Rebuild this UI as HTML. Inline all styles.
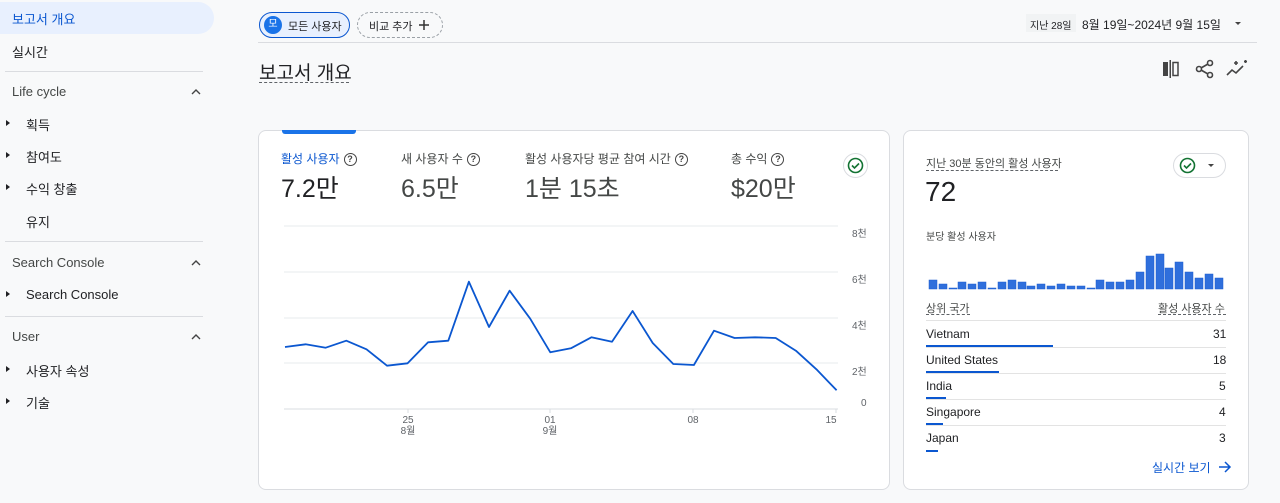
<!DOCTYPE html>
<html><head><meta charset="utf-8"><style>
*{box-sizing:border-box;margin:0;padding:0}
body{width:1280px;height:503px;overflow:hidden;background:#f8f9fa;font-family:"Liberation Sans","Noto Sans CJK KR",sans-serif;color:#202124;position:relative}
.a{position:absolute;white-space:nowrap}
.nav{font-size:13px;color:#202124}
.sec{font-size:13px;color:#444746}
.hr{position:absolute;height:1px;background:#dadce0}
.tri{position:absolute;width:0;height:0;border-top:3.5px solid transparent;border-bottom:3.5px solid transparent;border-left:4px solid #202124}
.card{position:absolute;background:#fff;border:1px solid #dadce0;border-radius:8px}
.q{display:inline-block;width:13px;height:13px;border:1.5px solid #444;border-radius:50%;font-size:9px;line-height:10px;text-align:center;font-weight:bold;vertical-align:1px;margin-left:4px;color:#444}
.lbl{font-size:12px;color:#444746}
.big{font-size:25px;color:#202124}
.chev{position:absolute}
</style></head><body>
<!-- sidebar -->
<div class="a" style="left:0;top:2px;width:214px;height:32px;background:#e8f0fe;border-radius:0 16px 16px 0"></div>
<div class="a nav" style="left:12px;top:9px;color:#0b57d0">보고서 개요</div>
<div class="a nav" style="left:12px;top:42px">실시간</div>
<div class="hr" style="left:5px;top:71px;width:198px"></div>
<div class="a sec" style="left:12px;top:84px">Life cycle</div>
<svg class="chev" style="left:190px;top:88px" width="12" height="8"><path d="M2 6l4-4 4 4" fill="none" stroke="#444" stroke-width="1.4"/></svg>
<div class="tri" style="left:6px;top:120px"></div><div class="a nav" style="left:26px;top:115px">획득</div>
<div class="tri" style="left:6px;top:152px"></div><div class="a nav" style="left:26px;top:147px">참여도</div>
<div class="tri" style="left:6px;top:184px"></div><div class="a nav" style="left:26px;top:179px">수익 창출</div>
<div class="a nav" style="left:26px;top:212px">유지</div>
<div class="hr" style="left:5px;top:241px;width:198px"></div>
<div class="a sec" style="left:12px;top:255px">Search Console</div>
<svg class="chev" style="left:190px;top:259px" width="12" height="8"><path d="M2 6l4-4 4 4" fill="none" stroke="#444" stroke-width="1.4"/></svg>
<div class="tri" style="left:6px;top:291px"></div><div class="a nav" style="left:26px;top:287px">Search Console</div>
<div class="hr" style="left:5px;top:316px;width:198px"></div>
<div class="a sec" style="left:12px;top:329px">User</div>
<svg class="chev" style="left:190px;top:333px" width="12" height="8"><path d="M2 6l4-4 4 4" fill="none" stroke="#444" stroke-width="1.4"/></svg>
<div class="tri" style="left:6px;top:366px"></div><div class="a nav" style="left:26px;top:361px">사용자 속성</div>
<div class="tri" style="left:6px;top:398px"></div><div class="a nav" style="left:26px;top:393px">기술</div>

<!-- top bar -->
<div class="a" style="left:259px;top:12px;width:91px;height:26px;border:1px solid #0b57d0;border-radius:13px;background:#e8f0fe"></div>
<div class="a" style="left:264px;top:16px;width:18px;height:18px;border-radius:50%;background:#1a73e8;color:#fff;font-size:10px;text-align:center;line-height:18px">모</div>
<div class="a" style="left:288px;top:18px;font-size:11px">모든 사용자</div>
<div class="a" style="left:357px;top:12px;width:86px;height:26px;border:1px dashed #9aa0a6;border-radius:13px"></div>
<div class="a" style="left:369px;top:18px;font-size:11px">비교 추가</div>
<svg class="a" style="left:418px;top:19px" width="12" height="12"><path d="M6 1v10M1 6h10" stroke="#333" stroke-width="1.5"/></svg>
<div class="a" style="left:1026px;top:14px;width:50px;height:18px;background:#f1f3f4"></div>
<div class="a" style="left:1030px;top:17px;font-size:10px;color:#202124">지난 28일</div>
<div class="a" style="left:1082px;top:16px;font-size:12px">8월 19일~2024년 9월 15일</div>
<div class="a" style="left:1235px;top:22px;border-left:3.5px solid transparent;border-right:3.5px solid transparent;border-top:3.5px solid #444"></div>
<div class="hr" style="left:258px;top:42px;width:999px"></div>
<div class="a" style="left:259px;top:58px;font-size:19px">보고서 개요</div>
<div class="a" style="left:259px;top:82px;width:90px;border-top:1px dashed #5f6368"></div>
<svg class="a" style="left:1160px;top:58px" width="90" height="22" viewBox="0 0 90 22">
<rect x="3" y="4" width="5" height="14" fill="#444"/><rect x="9.5" y="2" width="1.5" height="18" fill="#444"/><rect x="13" y="4.5" width="5" height="13" fill="none" stroke="#444" stroke-width="1.5"/>
<g fill="none" stroke="#444" stroke-width="1.6"><circle cx="50" cy="5" r="2.5"/><circle cx="50" cy="17" r="2.5"/><circle cx="39" cy="11" r="2.5"/><path d="M41 10L48 6M41 12L48 16"/>
<path d="M67 17L72 12L76 15L83 8"/><path d="M74 5h4M76 3v4M84 3.5h3M85.5 2v3"/></g></svg>

<!-- main card -->
<div class="card" style="left:258px;top:130px;width:632px;height:360px"></div>
<div class="a" style="left:282px;top:130px;width:74px;height:4px;background:#1a73e8;border-radius:0 0 3px 3px"></div>
<div class="a lbl" style="left:281px;top:150px;color:#0b57d0">활성 사용자<span class="q">?</span></div>
<div class="a big" style="left:281px;top:169px">7.2만</div>
<div class="a lbl" style="left:401px;top:150px">새 사용자 수<span class="q">?</span></div>
<div class="a big" style="left:401px;top:169px;color:#444746">6.5만</div>
<div class="a lbl" style="left:525px;top:150px">활성 사용자당 평균 참여 시간<span class="q">?</span></div>
<div class="a big" style="left:525px;top:169px;color:#444746">1분 15초</div>
<div class="a lbl" style="left:731px;top:150px">총 수익<span class="q">?</span></div>
<div class="a big" style="left:731px;top:169px;color:#444746">$20만</div>
<div class="a" style="left:843px;top:153px;width:25px;height:25px;border-radius:50%;border:1px solid #dadce0"></div>
<svg class="a" style="left:846px;top:156px" width="19" height="19"><circle cx="9.5" cy="9.5" r="7" fill="none" stroke="#137333" stroke-width="1.6"/><path d="M6 9.5l2.5 2.5 4.5-4.5" fill="none" stroke="#137333" stroke-width="1.6"/></svg>
<svg class="a" style="left:258px;top:220px" width="632" height="220">
<g stroke="#eceff1" stroke-width="1.2"><line x1="26" y1="6" x2="580" y2="6"/><line x1="26" y1="52" x2="580" y2="52"/><line x1="26" y1="98" x2="580" y2="98"/><line x1="26" y1="143" x2="580" y2="143"/></g>
<line x1="26" y1="189" x2="580" y2="189" stroke="#dadce0"/>
<g stroke="#dadce0"><line x1="150" y1="189" x2="150" y2="193"/><line x1="292" y1="189" x2="292" y2="193"/><line x1="435" y1="189" x2="435" y2="193"/><line x1="578" y1="189" x2="578" y2="193"/></g>
<g font-family="Liberation Sans,Noto Sans CJK KR,sans-serif" font-size="10" fill="#5f6368">
<text x="594" y="17">8천</text><text x="594" y="63">6천</text><text x="594" y="109">4천</text><text x="594" y="155">2천</text><text x="603" y="186">0</text>
<text x="150" y="203" text-anchor="middle">25</text><text x="150" y="214" text-anchor="middle">8월</text>
<text x="292" y="203" text-anchor="middle">01</text><text x="292" y="214" text-anchor="middle">9월</text>
<text x="435" y="203" text-anchor="middle">08</text><text x="573" y="203" text-anchor="middle">15</text></g>
<polyline fill="none" stroke="#0b57d0" stroke-width="1.8" stroke-linejoin="round" transform="translate(-258,-220)" points="285,347 305.6,344.3 325.7,347.7 346.3,340.7 366.5,349.3 387,365.7 407.6,363.3 428.1,342.3 448.3,340.7 468.9,281.7 489,327 509.6,290.7 530.2,318.7 550.3,352.3 570.9,348.3 591.4,337.3 612,341.7 632.6,311 652.7,343 673.3,364 693.9,365 714,330.7 734.6,338 755.1,337.3 775.7,338 795.9,350.7 816.4,369.3 836.6,390.3"/>
</svg>

<!-- realtime card -->
<div class="card" style="left:903px;top:130px;width:346px;height:360px"></div>
<div class="a" style="left:926px;top:155px;font-size:11px;color:#444746">지난 30분 동안의 활성 사용자</div>
<div class="a" style="left:926px;top:170px;width:132px;border-top:1px dashed #5f6368"></div>
<div class="a" style="left:925px;top:176px;font-size:28px">72</div>
<div class="a" style="left:1173px;top:153px;width:53px;height:25px;border-radius:13px;border:1px solid #dadce0"></div>
<svg class="a" style="left:1178px;top:156px" width="19" height="19"><circle cx="9.5" cy="9.5" r="7" fill="none" stroke="#137333" stroke-width="1.6"/><path d="M6 9.5l2.5 2.5 4.5-4.5" fill="none" stroke="#137333" stroke-width="1.6"/></svg>
<div class="a" style="left:1208px;top:164px;border-left:3.5px solid transparent;border-right:3.5px solid transparent;border-top:3.5px solid #444"></div>
<div class="a" style="left:926px;top:228px;font-size:10px;color:#444746">분당 활성 사용자</div>
<svg class="a" style="left:926px;top:240px" width="300" height="50" fill="#2f6fdc" stroke="#1a5fd0" stroke-width=".5">
<rect x="3" y="40" width="8" height="9"/><rect x="13" y="44" width="8" height="5"/><rect x="23" y="48" width="8" height="1"/><rect x="32" y="42" width="8" height="7"/><rect x="42" y="44" width="8" height="5"/><rect x="52" y="42" width="8" height="7"/><rect x="62" y="48" width="8" height="1"/><rect x="72" y="42" width="8" height="7"/><rect x="82" y="40" width="8" height="9"/><rect x="92" y="42" width="8" height="7"/><rect x="101" y="46" width="8" height="3"/><rect x="111" y="44" width="8" height="5"/><rect x="121" y="46" width="8" height="3"/><rect x="131" y="44" width="8" height="5"/><rect x="141" y="46" width="8" height="3"/><rect x="151" y="46" width="8" height="3"/><rect x="161" y="48" width="8" height="1"/><rect x="170" y="40" width="8" height="9"/><rect x="180" y="42" width="8" height="7"/><rect x="190" y="42" width="8" height="7"/><rect x="200" y="40" width="8" height="9"/><rect x="210" y="32" width="8" height="17"/><rect x="220" y="16" width="8" height="33"/><rect x="230" y="14" width="8" height="35"/><rect x="239" y="28" width="8" height="21"/><rect x="249" y="22" width="8" height="27"/><rect x="259" y="32" width="8" height="17"/><rect x="269" y="38" width="8" height="11"/><rect x="279" y="34" width="8" height="15"/><rect x="289" y="38" width="8" height="11"/></svg>
<div class="a" style="left:926px;top:300px;font-size:11px;color:#444746">상위 국가</div>
<div class="a" style="left:926px;top:314px;width:44px;border-top:1px dashed #5f6368"></div>
<div class="a" style="left:1158px;top:300px;font-size:11px;color:#444746">활성 사용자 수</div>
<div class="a" style="left:1158px;top:314px;width:68px;border-top:1px dashed #5f6368"></div>
<div class="hr" style="left:926px;top:320px;width:300px;background:#e3e3e3"></div>
<div class="a" style="left:926px;top:327px;font-size:12px">Vietnam</div><div class="a" style="left:1213px;top:327px;font-size:12px">31</div>
<div class="a" style="left:926px;top:345px;width:127px;height:2px;background:#0b57d0"></div>
<div class="hr" style="left:926px;top:347px;width:300px;background:#e3e3e3"></div>
<div class="a" style="left:926px;top:353px;font-size:12px">United States</div><div class="a" style="left:1213px;top:353px;font-size:12px">18</div>
<div class="a" style="left:926px;top:371px;width:73px;height:2px;background:#0b57d0"></div>
<div class="hr" style="left:926px;top:373px;width:300px;background:#e3e3e3"></div>
<div class="a" style="left:926px;top:379px;font-size:12px">India</div><div class="a" style="left:1219px;top:379px;font-size:12px">5</div>
<div class="a" style="left:926px;top:397px;width:20px;height:2px;background:#0b57d0"></div>
<div class="hr" style="left:926px;top:399px;width:300px;background:#e3e3e3"></div>
<div class="a" style="left:926px;top:405px;font-size:12px">Singapore</div><div class="a" style="left:1219px;top:405px;font-size:12px">4</div>
<div class="a" style="left:926px;top:423px;width:17px;height:2px;background:#0b57d0"></div>
<div class="hr" style="left:926px;top:425px;width:300px;background:#e3e3e3"></div>
<div class="a" style="left:926px;top:431px;font-size:12px">Japan</div><div class="a" style="left:1219px;top:431px;font-size:12px">3</div>
<div class="a" style="left:926px;top:450px;width:12px;height:2px;background:#0b57d0"></div>
<div class="a" style="left:1152px;top:459px;font-size:12px;color:#0b57d0">실시간 보기</div>
<svg class="a" style="left:1218px;top:460px" width="14" height="14"><path d="M1 7h11M7 2l5 5-5 5" fill="none" stroke="#0b57d0" stroke-width="1.5"/></svg>
</body></html>
